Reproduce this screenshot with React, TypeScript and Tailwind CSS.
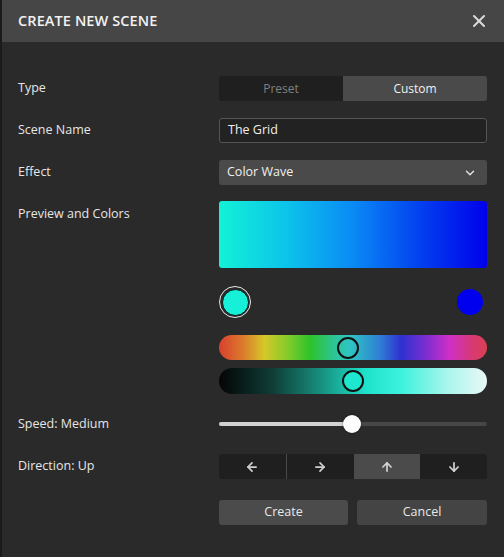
import { X, ChevronDown, ArrowLeft, ArrowRight, ArrowUp, ArrowDown } from "lucide-react";

const font = { fontFamily: '"Open Sans", "Noto Sans", sans-serif' };

function Row({ label, children, className = "", top = false }: { label: string; children: React.ReactNode; className?: string; top?: boolean }) {
  return (
    <div className={`flex ${top ? "items-start" : "items-center"} ${className}`}>
      <div className={`w-[201px] shrink-0 text-[12.5px] text-[#e6e6e6] ${top ? "pt-[4px]" : ""}`}>{label}</div>
      <div className="w-[268px]">{children}</div>
    </div>
  );
}

export default function App() {
  const directions = [
    { icon: ArrowLeft, active: false },
    { icon: ArrowRight, active: false },
    { icon: ArrowUp, active: true },
    { icon: ArrowDown, active: false },
  ];

  return (
    <div className="w-[504px] h-[557px] bg-[#2a2a2a] border-l-2 border-[#1b1b1b] overflow-hidden" style={font}>
      {/* Header */}
      <div className="h-[42px] bg-[#464646] flex items-center justify-between pl-[16px] pr-[15px]">
        <h1 className="text-[14.5px] font-semibold text-[#f2f2f2] tracking-[0.1px]">CREATE NEW SCENE</h1>
        <X className="h-[20px] w-[20px] text-[#d8d8d8]" strokeWidth={2.5} />
      </div>

      <div className="pl-[16px]">
        {/* Type */}
        <Row label="Type" className="mt-[34px]">
          <div className="flex h-[25px] rounded-[3px] overflow-hidden text-[12px]">
            <div className="w-[124px] bg-[#1f1f1f] text-[#808080] flex items-center justify-center">Preset</div>
            <div className="flex-1 bg-[#4a4a4a] text-[#f0f0f0] flex items-center justify-center">Custom</div>
          </div>
        </Row>

        {/* Scene Name */}
        <Row label="Scene Name" className="mt-[17px]">
          <div className="h-[25px] rounded-[3px] border border-[#555555] bg-[#222222] flex items-center px-[8px] text-[12.5px] text-[#f0f0f0]">
            The Grid
          </div>
        </Row>

        {/* Effect */}
        <Row label="Effect" className="mt-[17px]">
          <div className="h-[25px] rounded-[3px] bg-[#4a4a4a] flex items-center justify-between pl-[8px] pr-[10px] text-[12.5px] text-[#f0f0f0]">
            <span>Color Wave</span>
            <ChevronDown className="h-[14px] w-[14px] text-[#e0e0e0]" strokeWidth={2.5} />
          </div>
        </Row>

        {/* Preview */}
        <Row label="Preview and Colors" className="mt-[16px]" top>
          <div className="h-[67px] rounded-[3px] bg-[linear-gradient(to_right,#12f2d6_0%,#0cc4ea_25%,#0a8af5_50%,#0340ef_75%,#0000ec_100%)]" />
        </Row>

        {/* Color stops */}
        <Row label="" className="mt-[18px]">
          <div className="h-[32px] flex items-center justify-between pr-[4px]">
            <div className="h-[32px] w-[32px] rounded-full border-[1.5px] border-[#e8e8e8] p-[1.5px]">
              <div className="h-full w-full rounded-full bg-[#16f0d8] border-[1.5px] border-[#111111]" />
            </div>
            <div className="h-[26px] w-[26px] rounded-full bg-[#0000ee]" />
          </div>
        </Row>

        {/* Hue bar */}
        <Row label="" className="mt-[17px]">
          <div className="relative h-[25px] rounded-full bg-[linear-gradient(to_right,#d8402e_0%,#dc7a2c_9%,#d5c829_17%,#7fcc2a_26%,#2dc32b_34%,#2dc5a0_44%,#2fc4c4_49%,#2e7fd4_60%,#2e30cf_68%,#7a2ed0_77%,#cf2fc8_86%,#d83a70_95%,#d94050_100%)]">
            <div className="absolute top-[1.5px] left-[118px] h-[22px] w-[22px] rounded-full border-2 border-[#111111]" />
          </div>
        </Row>

        {/* Saturation bar */}
        <Row label="" className="mt-[8px]">
          <div className="relative h-[26px] rounded-full bg-[linear-gradient(to_right,#050505_0%,#0f3d36_20%,#17907f_38%,#1ee3cc_55%,#3cf2dd_68%,#a8f5ec_85%,#eaf8f7_100%)]">
            <div className="absolute top-[2px] left-[123px] h-[22px] w-[22px] rounded-full border-2 border-[#111111] bg-[#1de7cf]" />
          </div>
        </Row>

        {/* Speed */}
        <Row label="Speed: Medium" className="mt-[20px]">
          <div className="relative h-[20px] flex items-center">
            <div className="h-[4px] w-full rounded-full bg-[#474747] overflow-hidden">
              <div className="h-full w-[133px] bg-[#d2d2d2]" />
            </div>
            <div className="absolute left-[124px] top-[1px] h-[18px] w-[18px] rounded-full bg-white shadow-[0_0_2px_rgba(0,0,0,0.6)]" />
          </div>
        </Row>

        {/* Direction */}
        <Row label="Direction: Up" className="mt-[20px]">
          <div className="flex h-[25px] rounded-[3px] overflow-hidden">
            {directions.map(({ icon: Icon, active }, i) => (
              <div
                key={i}
                className={`flex-1 flex items-center justify-center ${active ? "bg-[#4b4b4b]" : "bg-[#1f1f1f]"} ${i === 1 ? "border-l border-[#4a4a4a]" : ""}`}
              >
                <Icon className="h-[14px] w-[14px] text-[#cfcfcf]" strokeWidth={3} />
              </div>
            ))}
          </div>
        </Row>

        {/* Actions */}
        <Row label="" className="mt-[21px]">
          <div className="flex gap-[9px] text-[12.5px] text-[#e8e8e8]">
            <button className="h-[25px] w-[129px] rounded-[3px] bg-[#4b4b4b]">Create</button>
            <button className="h-[25px] flex-1 rounded-[3px] bg-[#444444]">Cancel</button>
          </div>
        </Row>
      </div>
    </div>
  );
}
